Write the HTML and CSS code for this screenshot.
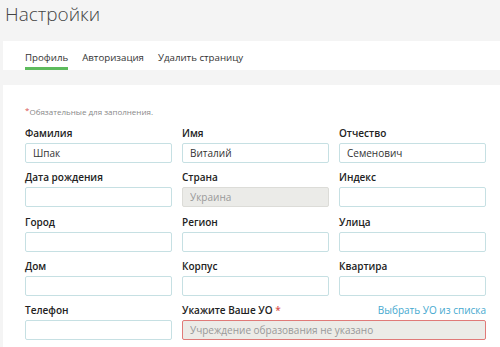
FILE: index.html
```html
<!DOCTYPE html>
<html>
<head>
	<meta charset="utf-8">
	<title>Настройки</title>
	<link rel="stylesheet" href="styles.css">
</head>
<body>

	<h1 class="page-title">Настройки</h1>

	<div class="tabs">
		<a class="tab active">Профиль</a>
		<a class="tab">Авторизация</a>
		<a class="tab">Удалить страницу</a>
	</div>

	<div class="card">
		<p class="note"><span class="req">*</span>Обязательные для заполнения.</p>
		<div class="form-grid">
			<div class="field">
				<label>Фамилия</label>
				<input class="input" value="Шпак">
			</div>
			<div class="field">
				<label>Имя</label>
				<input class="input" value="Виталий">
			</div>
			<div class="field">
				<label>Отчество</label>
				<input class="input" value="Семенович">
			</div>

			<div class="field">
				<label>Дата рождения</label>
				<input class="input">
			</div>
			<div class="field">
				<label>Страна</label>
				<input class="input" value="Украина" disabled>
			</div>
			<div class="field">
				<label>Индекс</label>
				<input class="input">
			</div>

			<div class="field">
				<label>Город</label>
				<input class="input">
			</div>
			<div class="field">
				<label>Регион</label>
				<input class="input">
			</div>
			<div class="field">
				<label>Улица</label>
				<input class="input">
			</div>

			<div class="field">
				<label>Дом</label>
				<input class="input">
			</div>
			<div class="field">
				<label>Корпус</label>
				<input class="input">
			</div>
			<div class="field">
				<label>Квартира</label>
				<input class="input">
			</div>

			<div class="field">
				<label>Телефон</label>
				<input class="input">
			</div>
			<div class="field wide">
				<div class="label-row">
					<label>Укажите Ваше УО <span class="req">*</span></label>
					<a class="link">Выбрать УО из списка</a>
				</div>
				<input class="input error" placeholder="Учреждение образования не указано">
			</div>
		</div>
	</div>

</body>
</html>
```

FILE: styles.css
```css
* {
	box-sizing: border-box;
}
body {
	margin: 0;
	background: #f4f4f4;
	font-family: "Open Sans", "Liberation Sans", sans-serif;
	color: #333;
}
.page-title {
	margin: 0;
	padding: 0 0 0 5px;
	height: 41px;
	font-size: 19px;
	font-weight: 300;
	line-height: 28px;
	color: #444;
}
.tabs {
	display: flex;
	gap: 14px;
	margin-left: 3px;
	padding-left: 22px;
	height: 29px;
	background: #fff;
}
.tab {
	display: block;
	font-size: 9.7px;
	line-height: 14px;
	padding-top: 10px;
	color: #333;
	border-bottom: solid 3px transparent;
}
.tab.active {
	border-bottom-color: #5dbb5d;
}
.card {
	margin: 15px 0 0 3px;
	padding: 18px 0 20px 22px;
	background: #fff;
}
.note {
	margin: 0 0 7px;
	font-size: 8px;
	line-height: 14px;
	color: #888;
}
.note .req {
	vertical-align: 2px;
}
.req {
	color: #d9534f;
}
.form-grid {
	display: grid;
	grid-template-columns: 147px 147px 147px;
	column-gap: 10px;
	row-gap: 7.3px;
}
.field label {
	display: block;
	font-size: 10px;
	font-weight: 600;
	line-height: 14px;
	margin-bottom: 3px;
	color: #222;
}
.field.wide {
	grid-column: span 2;
}
.label-row {
	display: flex;
	justify-content: space-between;
	align-items: flex-start;
}
.link {
	font-size: 10px;
	line-height: 14px;
	color: #45a9cf;
}
.input {
	display: block;
	width: 100%;
	height: 20px;
	margin: 0;
	padding: 0 7px;
	border: solid 1px #c6e0e3;
	border-radius: 2px;
	background: #fff;
	font-family: inherit;
	font-size: 10px;
	color: #333;
	outline: none;
}
.input:disabled {
	background: #ebebe8;
	border-color: #dcdcd8;
	color: #999;
}
.input.error {
	background: #ecebe7;
	border-color: #e07a78;
}
.input::placeholder {
	color: #999;
}
```
